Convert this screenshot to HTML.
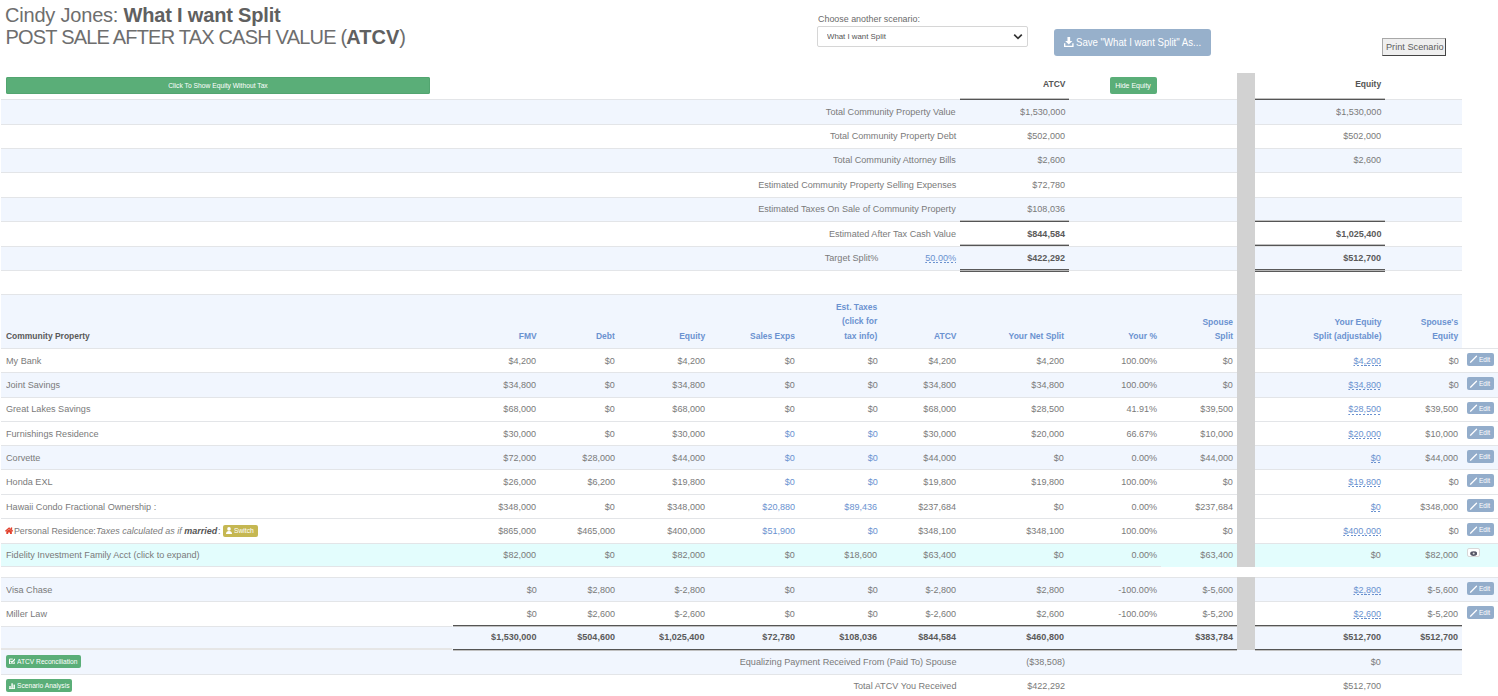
<!DOCTYPE html>
<html><head><meta charset="utf-8"><title>ATCV</title>
<style>
html,body{margin:0;padding:0;background:#fff;width:1498px;height:696px;overflow:hidden;position:relative}
body{font-family:"Liberation Sans",sans-serif;color:#666}
.t{position:absolute;white-space:nowrap;font-family:"Liberation Sans",sans-serif}
</style></head><body>
<div class="t" style="left:5px;top:4.4px;font-size:20px;line-height:22px;color:#6e6e6e"><span style="letter-spacing:-0.2px">Cindy Jones: </span><b style="color:#606060;letter-spacing:-0.18px">What I want Split</b></div>
<div class="t" style="left:5.5px;top:26.4px;font-size:20px;line-height:22px;color:#6e6e6e"><span style="letter-spacing:-0.8px">POST SALE AFTER TAX CASH VALUE (</span><b style="color:#606060">ATCV</b>)</div>
<div class="t" style="left:817.5px;top:13px;height:12px;line-height:12px;font-size:9.5px;color:#6a6a6a;transform-origin:left center;transform:scaleX(0.937);">Choose another scenario:</div>
<div style="position:absolute;left:817.3px;top:26px;width:210.3px;height:20.8px;box-sizing:border-box;border:1px solid #d6d6d6;border-radius:2px;background:#fff"></div>
<div class="t" style="left:827.2px;top:27px;height:20.4px;line-height:20.4px;font-size:8px;color:#555;transform-origin:left center;transform:scaleX(0.98);">What I want Split</div>
<svg style="position:absolute;left:1013px;top:32.5px" width="10" height="8" viewBox="0 0 10 8"><path d="M1.2 1.6 L5 5.4 L8.8 1.6" stroke="#333" stroke-width="1.7" fill="none"/></svg>
<div style="position:absolute;left:1054.2px;top:29.1px;width:156.4px;height:26.6px;background:#97b0cb;border-radius:3px"></div>
<svg style="position:absolute;left:1064.2px;top:36.5px" width="9.6" height="10" viewBox="0 0 10 10.4"><path d="M3.6 0 H6.4 V4.2 H8.8 L5 7.8 L1.2 4.2 H3.6 Z" fill="#fff"/><path d="M0 6.6 V10.4 H10 V6.6 H8.6 V9 H1.4 V6.6 Z" fill="#fff"/></svg>
<div class="t" style="left:1076px;top:29.1px;height:26.6px;line-height:26.6px;font-size:11.5px;color:#fff;transform-origin:left center;transform:scaleX(0.837);">Save "What I want Split" As...</div>
<div style="position:absolute;left:1382.4px;top:38.3px;width:63.2px;height:17.4px;box-sizing:border-box;background:#efefef;border:1px solid;border-color:#a8a8a8 #444 #444 #a8a8a8"></div>
<div class="t" style="left:1386px;top:38.9px;height:17.4px;line-height:17.4px;font-size:9px;color:#5e5e5e;transform-origin:left center;transform:scaleX(1.02);">Print Scenario</div>
<div style="position:absolute;left:5.6px;top:77.1px;width:424.6px;height:17px;background:#5aae78;border-radius:2px;box-shadow:inset 0 0 0 1px #52a570"></div>
<div class="t" style="left:17.5px;width:400px;text-align:center;top:77.1px;height:17px;line-height:17px;font-size:7px;color:#fff;transform-origin:center center;transform:scaleX(0.96);">Click To Show Equity Without Tax</div>
<div class="t" style="right:433px;top:73.80000000000001px;height:20px;line-height:20px;font-size:8.9px;color:#555;transform-origin:right center;transform:scaleX(0.955);"><b>ATCV</b></div>
<div style="position:absolute;left:1110.3px;top:77px;width:46.5px;height:17.1px;background:#5aae78;border-radius:2px"></div>
<div class="t" style="left:933.4000000000001px;width:400px;text-align:center;top:77.3px;height:17.1px;line-height:17.1px;font-size:7.2px;color:#fff;transform-origin:center center;transform:scaleX(0.97);">Hide Equity</div>
<div class="t" style="right:117px;top:73.80000000000001px;height:20px;line-height:20px;font-size:8.9px;color:#555;transform-origin:right center;transform:scaleX(0.955);"><b>Equity</b></div>
<div style="position:absolute;left:1px;top:99.3px;width:1461px;height:24.375px;background:#f1f6fe"></div>
<div style="position:absolute;left:1px;top:99.3px;width:1461px;height:1px;background:#e3e5e8"></div>
<div class="t" style="right:542px;top:99.7px;height:24.375px;line-height:24.375px;font-size:8.9px;color:#7a7a7a;transform-origin:right center;transform:scaleX(1.025);">Total Community Property Value</div>
<div class="t" style="right:433px;top:99.7px;height:24.375px;line-height:24.375px;font-size:8.9px;color:#7a7a7a;transform-origin:right center;transform:scaleX(1.02);">$1,530,000</div>
<div class="t" style="right:117px;top:99.7px;height:24.375px;line-height:24.375px;font-size:8.9px;color:#7a7a7a;transform-origin:right center;transform:scaleX(1.02);">$1,530,000</div>
<div style="position:absolute;left:1px;top:123.675px;width:1461px;height:1px;background:#e3e5e8"></div>
<div class="t" style="right:542px;top:124.075px;height:24.375px;line-height:24.375px;font-size:8.9px;color:#7a7a7a;transform-origin:right center;transform:scaleX(1.025);">Total Community Property Debt</div>
<div class="t" style="right:433px;top:124.075px;height:24.375px;line-height:24.375px;font-size:8.9px;color:#7a7a7a;transform-origin:right center;transform:scaleX(1.02);">$502,000</div>
<div class="t" style="right:117px;top:124.075px;height:24.375px;line-height:24.375px;font-size:8.9px;color:#7a7a7a;transform-origin:right center;transform:scaleX(1.02);">$502,000</div>
<div style="position:absolute;left:1px;top:148.05px;width:1461px;height:24.375px;background:#f1f6fe"></div>
<div style="position:absolute;left:1px;top:148.05px;width:1461px;height:1px;background:#e3e5e8"></div>
<div class="t" style="right:542px;top:148.45000000000002px;height:24.375px;line-height:24.375px;font-size:8.9px;color:#7a7a7a;transform-origin:right center;transform:scaleX(1.025);">Total Community Attorney Bills</div>
<div class="t" style="right:433px;top:148.45000000000002px;height:24.375px;line-height:24.375px;font-size:8.9px;color:#7a7a7a;transform-origin:right center;transform:scaleX(1.02);">$2,600</div>
<div class="t" style="right:117px;top:148.45000000000002px;height:24.375px;line-height:24.375px;font-size:8.9px;color:#7a7a7a;transform-origin:right center;transform:scaleX(1.02);">$2,600</div>
<div style="position:absolute;left:1px;top:172.425px;width:1461px;height:1px;background:#e3e5e8"></div>
<div class="t" style="right:542px;top:172.82500000000002px;height:24.375px;line-height:24.375px;font-size:8.9px;color:#7a7a7a;transform-origin:right center;transform:scaleX(1.025);">Estimated Community Property Selling Expenses</div>
<div class="t" style="right:433px;top:172.82500000000002px;height:24.375px;line-height:24.375px;font-size:8.9px;color:#7a7a7a;transform-origin:right center;transform:scaleX(1.02);">$72,780</div>
<div style="position:absolute;left:1px;top:196.8px;width:1461px;height:24.375px;background:#f1f6fe"></div>
<div style="position:absolute;left:1px;top:196.8px;width:1461px;height:1px;background:#e3e5e8"></div>
<div class="t" style="right:542px;top:197.20000000000002px;height:24.375px;line-height:24.375px;font-size:8.9px;color:#7a7a7a;transform-origin:right center;transform:scaleX(1.025);">Estimated Taxes On Sale of Community Property</div>
<div class="t" style="right:433px;top:197.20000000000002px;height:24.375px;line-height:24.375px;font-size:8.9px;color:#7a7a7a;transform-origin:right center;transform:scaleX(1.02);">$108,036</div>
<div style="position:absolute;left:1px;top:221.175px;width:1461px;height:1px;background:#e3e5e8"></div>
<div class="t" style="right:542px;top:221.57500000000002px;height:24.375px;line-height:24.375px;font-size:8.9px;color:#7a7a7a;transform-origin:right center;transform:scaleX(1.025);">Estimated After Tax Cash Value</div>
<div class="t" style="right:433px;top:221.57500000000002px;height:24.375px;line-height:24.375px;font-size:8.9px;color:#5a5a5a;transform-origin:right center;transform:scaleX(1.02);"><b>$844,584</b></div>
<div class="t" style="right:117px;top:221.57500000000002px;height:24.375px;line-height:24.375px;font-size:8.9px;color:#5a5a5a;transform-origin:right center;transform:scaleX(1.02);"><b>$1,025,400</b></div>
<div style="position:absolute;left:1px;top:245.55px;width:1461px;height:24.375px;background:#f1f6fe"></div>
<div style="position:absolute;left:1px;top:245.55px;width:1461px;height:1px;background:#e3e5e8"></div>
<div class="t" style="right:620px;top:245.95000000000002px;height:24.375px;line-height:24.375px;font-size:8.9px;color:#7a7a7a;transform-origin:right center;transform:scaleX(1.025);">Target Split%</div>
<div class="t" style="right:542px;top:245.95000000000002px;height:24.375px;line-height:24.375px;font-size:8.9px;color:#6b92d0;transform-origin:right center;transform:scaleX(1.025);"><span style="background:repeating-linear-gradient(90deg,#6b92d0 0 2px,transparent 2px 3.6px) right bottom/100% 1px no-repeat;line-height:9px;padding-bottom:0.5px;display:inline-block">50.00%</span></div>
<div class="t" style="right:433px;top:245.95000000000002px;height:24.375px;line-height:24.375px;font-size:8.9px;color:#5a5a5a;transform-origin:right center;transform:scaleX(1.02);"><b>$422,292</b></div>
<div class="t" style="right:117px;top:245.95000000000002px;height:24.375px;line-height:24.375px;font-size:8.9px;color:#5a5a5a;transform-origin:right center;transform:scaleX(1.02);"><b>$512,700</b></div>
<div style="position:absolute;left:1px;top:269.925px;width:1461px;height:1px;background:#e3e5e8"></div>
<div style="position:absolute;left:1px;top:294.3px;width:1461px;height:1px;background:#e3e5e8"></div>
<div style="position:absolute;left:960px;top:98px;width:109px;height:1px;background:#c0c0c0;z-index:2"></div>
<div style="position:absolute;left:960px;top:99px;width:109px;height:1px;background:#555;z-index:2"></div>
<div style="position:absolute;left:1255px;top:98px;width:130px;height:1px;background:#c0c0c0;z-index:2"></div>
<div style="position:absolute;left:1255px;top:99px;width:130px;height:1px;background:#555;z-index:2"></div>
<div style="position:absolute;left:960px;top:220px;width:109px;height:1px;background:#c0c0c0;z-index:2"></div>
<div style="position:absolute;left:960px;top:221px;width:109px;height:1px;background:#555;z-index:2"></div>
<div style="position:absolute;left:1255px;top:220px;width:130px;height:1px;background:#c0c0c0;z-index:2"></div>
<div style="position:absolute;left:1255px;top:221px;width:130px;height:1px;background:#555;z-index:2"></div>
<div style="position:absolute;left:960px;top:244px;width:109px;height:1px;background:#c0c0c0;z-index:2"></div>
<div style="position:absolute;left:960px;top:245px;width:109px;height:1px;background:#555;z-index:2"></div>
<div style="position:absolute;left:1255px;top:244px;width:130px;height:1px;background:#c0c0c0;z-index:2"></div>
<div style="position:absolute;left:1255px;top:245px;width:130px;height:1px;background:#555;z-index:2"></div>
<div style="position:absolute;left:960px;top:269px;width:109px;height:1px;background:#5a5a5a"></div>
<div style="position:absolute;left:960px;top:270px;width:109px;height:1px;background:#b8b8b8"></div>
<div style="position:absolute;left:960px;top:271px;width:109px;height:1px;background:#5a5a5a"></div>
<div style="position:absolute;left:1255px;top:269px;width:130px;height:1px;background:#5a5a5a"></div>
<div style="position:absolute;left:1255px;top:270px;width:130px;height:1px;background:#b8b8b8"></div>
<div style="position:absolute;left:1255px;top:271px;width:130px;height:1px;background:#5a5a5a"></div>
<div style="position:absolute;left:1px;top:294.3px;width:1461px;height:53.8px;background:#f1f6fe"></div>
<div style="position:absolute;left:1px;top:294.3px;width:1461px;height:1px;background:#e3e5e8"></div>
<div class="t" style="left:5.5px;top:329.1px;font-size:8.9px;color:#5a5a5a;font-weight:bold;line-height:14.6px;transform-origin:left center;transform:scaleX(0.955)">Community Property</div>
<div class="t" style="right:961.6px;top:329.1px;text-align:right;font-size:8.9px;color:#6b92d0;font-weight:bold;line-height:14.6px;transform-origin:right center;transform:scaleX(0.955)">FMV</div>
<div class="t" style="right:883.1px;top:329.1px;text-align:right;font-size:8.9px;color:#6b92d0;font-weight:bold;line-height:14.6px;transform-origin:right center;transform:scaleX(0.955)">Debt</div>
<div class="t" style="right:793.2px;top:329.1px;text-align:right;font-size:8.9px;color:#6b92d0;font-weight:bold;line-height:14.6px;transform-origin:right center;transform:scaleX(0.955)">Equity</div>
<div class="t" style="right:703.2px;top:329.1px;text-align:right;font-size:8.9px;color:#6b92d0;font-weight:bold;line-height:14.6px;transform-origin:right center;transform:scaleX(0.955)">Sales Exps</div>
<div class="t" style="right:620.5px;top:299.90000000000003px;text-align:right;font-size:8.9px;color:#6b92d0;font-weight:bold;line-height:14.6px;transform-origin:right center;transform:scaleX(0.955)">Est. Taxes<br>(click for<br>tax info)</div>
<div class="t" style="right:542px;top:329.1px;text-align:right;font-size:8.9px;color:#6b92d0;font-weight:bold;line-height:14.6px;transform-origin:right center;transform:scaleX(0.955)">ATCV</div>
<div class="t" style="right:433.70000000000005px;top:329.1px;text-align:right;font-size:8.9px;color:#6b92d0;font-weight:bold;line-height:14.6px;transform-origin:right center;transform:scaleX(0.955)">Your Net Split</div>
<div class="t" style="right:341px;top:329.1px;text-align:right;font-size:8.9px;color:#6b92d0;font-weight:bold;line-height:14.6px;transform-origin:right center;transform:scaleX(0.955)">Your %</div>
<div class="t" style="right:265.29999999999995px;top:314.50000000000006px;text-align:right;font-size:8.9px;color:#6b92d0;font-weight:bold;line-height:14.6px;transform-origin:right center;transform:scaleX(0.955)">Spouse<br>Split</div>
<div class="t" style="right:117px;top:314.50000000000006px;text-align:right;font-size:8.9px;color:#6b92d0;font-weight:bold;line-height:14.6px;transform-origin:right center;transform:scaleX(0.955)">Your Equity<br>Split (adjustable)</div>
<div class="t" style="right:39.5px;top:314.50000000000006px;text-align:right;font-size:8.9px;color:#6b92d0;font-weight:bold;line-height:14.6px;transform-origin:right center;transform:scaleX(0.955)">Spouse's<br>Equity</div>
<div style="position:absolute;left:1px;top:348.1px;width:1497px;height:1px;background:#e3e5e8"></div>
<div class="t" style="left:5.5px;top:348.5px;height:24.299999999999955px;line-height:24.299999999999955px;font-size:8.9px;color:#7a7a7a;transform-origin:left center;transform:scaleX(1.025);">My Bank</div>
<div class="t" style="right:961.6px;top:348.5px;height:24.299999999999955px;line-height:24.299999999999955px;font-size:8.9px;color:#7a7a7a;transform-origin:right center;transform:scaleX(1.02);">$4,200</div>
<div class="t" style="right:883.1px;top:348.5px;height:24.299999999999955px;line-height:24.299999999999955px;font-size:8.9px;color:#7a7a7a;transform-origin:right center;transform:scaleX(1.02);">$0</div>
<div class="t" style="right:793.2px;top:348.5px;height:24.299999999999955px;line-height:24.299999999999955px;font-size:8.9px;color:#7a7a7a;transform-origin:right center;transform:scaleX(1.02);">$4,200</div>
<div class="t" style="right:703.2px;top:348.5px;height:24.299999999999955px;line-height:24.299999999999955px;font-size:8.9px;color:#7a7a7a;transform-origin:right center;transform:scaleX(1.02);">$0</div>
<div class="t" style="right:620.5px;top:348.5px;height:24.299999999999955px;line-height:24.299999999999955px;font-size:8.9px;color:#7a7a7a;transform-origin:right center;transform:scaleX(1.02);">$0</div>
<div class="t" style="right:542px;top:348.5px;height:24.299999999999955px;line-height:24.299999999999955px;font-size:8.9px;color:#7a7a7a;transform-origin:right center;transform:scaleX(1.02);">$4,200</div>
<div class="t" style="right:433.70000000000005px;top:348.5px;height:24.299999999999955px;line-height:24.299999999999955px;font-size:8.9px;color:#7a7a7a;transform-origin:right center;transform:scaleX(1.02);">$4,200</div>
<div class="t" style="right:341px;top:348.5px;height:24.299999999999955px;line-height:24.299999999999955px;font-size:8.9px;color:#7a7a7a;transform-origin:right center;transform:scaleX(1.02);">100.00%</div>
<div class="t" style="right:265.29999999999995px;top:348.5px;height:24.299999999999955px;line-height:24.299999999999955px;font-size:8.9px;color:#7a7a7a;transform-origin:right center;transform:scaleX(1.02);">$0</div>
<div class="t" style="right:117px;top:348.5px;height:24.299999999999955px;line-height:24.299999999999955px;font-size:8.9px;color:#6b92d0;transform-origin:right center;transform:scaleX(1.02);"><span style="background:repeating-linear-gradient(90deg,#6b92d0 0 2px,transparent 2px 3.6px) right bottom/100% 1px no-repeat;line-height:9px;padding-bottom:0.5px;display:inline-block">$4,200</span></div>
<div class="t" style="right:39.5px;top:348.5px;height:24.299999999999955px;line-height:24.299999999999955px;font-size:8.9px;color:#7a7a7a;transform-origin:right center;transform:scaleX(1.02);">$0</div>
<div style="position:absolute;left:1466.8px;top:353.0px;width:27.1px;height:12.6px;background:#93adcb;border-radius:2px"></div>
<svg style="position:absolute;left:1469px;top:355.40000000000003px" width="9" height="9" viewBox="0 0 9 9"><path d="M1.5 7.2 L7.5 1.2" stroke="#fff" stroke-width="1.25" stroke-linecap="round"/></svg>
<div class="t" style="left:1478.6px;top:353.8px;height:12.6px;line-height:12.6px;font-size:7px;color:#fff;transform-origin:left center;transform:scaleX(0.92);">Edit</div>
<div style="position:absolute;left:1px;top:372.4px;width:1497px;height:24.600000000000023px;background:#f1f6fe"></div>
<div style="position:absolute;left:1px;top:372.4px;width:1497px;height:1px;background:#e3e5e8"></div>
<div class="t" style="left:5.5px;top:372.79999999999995px;height:24.600000000000023px;line-height:24.600000000000023px;font-size:8.9px;color:#7a7a7a;transform-origin:left center;transform:scaleX(1.025);">Joint Savings</div>
<div class="t" style="right:961.6px;top:372.79999999999995px;height:24.600000000000023px;line-height:24.600000000000023px;font-size:8.9px;color:#7a7a7a;transform-origin:right center;transform:scaleX(1.02);">$34,800</div>
<div class="t" style="right:883.1px;top:372.79999999999995px;height:24.600000000000023px;line-height:24.600000000000023px;font-size:8.9px;color:#7a7a7a;transform-origin:right center;transform:scaleX(1.02);">$0</div>
<div class="t" style="right:793.2px;top:372.79999999999995px;height:24.600000000000023px;line-height:24.600000000000023px;font-size:8.9px;color:#7a7a7a;transform-origin:right center;transform:scaleX(1.02);">$34,800</div>
<div class="t" style="right:703.2px;top:372.79999999999995px;height:24.600000000000023px;line-height:24.600000000000023px;font-size:8.9px;color:#7a7a7a;transform-origin:right center;transform:scaleX(1.02);">$0</div>
<div class="t" style="right:620.5px;top:372.79999999999995px;height:24.600000000000023px;line-height:24.600000000000023px;font-size:8.9px;color:#7a7a7a;transform-origin:right center;transform:scaleX(1.02);">$0</div>
<div class="t" style="right:542px;top:372.79999999999995px;height:24.600000000000023px;line-height:24.600000000000023px;font-size:8.9px;color:#7a7a7a;transform-origin:right center;transform:scaleX(1.02);">$34,800</div>
<div class="t" style="right:433.70000000000005px;top:372.79999999999995px;height:24.600000000000023px;line-height:24.600000000000023px;font-size:8.9px;color:#7a7a7a;transform-origin:right center;transform:scaleX(1.02);">$34,800</div>
<div class="t" style="right:341px;top:372.79999999999995px;height:24.600000000000023px;line-height:24.600000000000023px;font-size:8.9px;color:#7a7a7a;transform-origin:right center;transform:scaleX(1.02);">100.00%</div>
<div class="t" style="right:265.29999999999995px;top:372.79999999999995px;height:24.600000000000023px;line-height:24.600000000000023px;font-size:8.9px;color:#7a7a7a;transform-origin:right center;transform:scaleX(1.02);">$0</div>
<div class="t" style="right:117px;top:372.79999999999995px;height:24.600000000000023px;line-height:24.600000000000023px;font-size:8.9px;color:#6b92d0;transform-origin:right center;transform:scaleX(1.02);"><span style="background:repeating-linear-gradient(90deg,#6b92d0 0 2px,transparent 2px 3.6px) right bottom/100% 1px no-repeat;line-height:9px;padding-bottom:0.5px;display:inline-block">$34,800</span></div>
<div class="t" style="right:39.5px;top:372.79999999999995px;height:24.600000000000023px;line-height:24.600000000000023px;font-size:8.9px;color:#7a7a7a;transform-origin:right center;transform:scaleX(1.02);">$0</div>
<div style="position:absolute;left:1466.8px;top:377.29999999999995px;width:27.1px;height:12.6px;background:#93adcb;border-radius:2px"></div>
<svg style="position:absolute;left:1469px;top:379.7px" width="9" height="9" viewBox="0 0 9 9"><path d="M1.5 7.2 L7.5 1.2" stroke="#fff" stroke-width="1.25" stroke-linecap="round"/></svg>
<div class="t" style="left:1478.6px;top:378.09999999999997px;height:12.6px;line-height:12.6px;font-size:7px;color:#fff;transform-origin:left center;transform:scaleX(0.92);">Edit</div>
<div style="position:absolute;left:1px;top:397px;width:1497px;height:1px;background:#e3e5e8"></div>
<div class="t" style="left:5.5px;top:397.4px;height:24.100000000000023px;line-height:24.100000000000023px;font-size:8.9px;color:#7a7a7a;transform-origin:left center;transform:scaleX(1.025);">Great Lakes Savings</div>
<div class="t" style="right:961.6px;top:397.4px;height:24.100000000000023px;line-height:24.100000000000023px;font-size:8.9px;color:#7a7a7a;transform-origin:right center;transform:scaleX(1.02);">$68,000</div>
<div class="t" style="right:883.1px;top:397.4px;height:24.100000000000023px;line-height:24.100000000000023px;font-size:8.9px;color:#7a7a7a;transform-origin:right center;transform:scaleX(1.02);">$0</div>
<div class="t" style="right:793.2px;top:397.4px;height:24.100000000000023px;line-height:24.100000000000023px;font-size:8.9px;color:#7a7a7a;transform-origin:right center;transform:scaleX(1.02);">$68,000</div>
<div class="t" style="right:703.2px;top:397.4px;height:24.100000000000023px;line-height:24.100000000000023px;font-size:8.9px;color:#7a7a7a;transform-origin:right center;transform:scaleX(1.02);">$0</div>
<div class="t" style="right:620.5px;top:397.4px;height:24.100000000000023px;line-height:24.100000000000023px;font-size:8.9px;color:#7a7a7a;transform-origin:right center;transform:scaleX(1.02);">$0</div>
<div class="t" style="right:542px;top:397.4px;height:24.100000000000023px;line-height:24.100000000000023px;font-size:8.9px;color:#7a7a7a;transform-origin:right center;transform:scaleX(1.02);">$68,000</div>
<div class="t" style="right:433.70000000000005px;top:397.4px;height:24.100000000000023px;line-height:24.100000000000023px;font-size:8.9px;color:#7a7a7a;transform-origin:right center;transform:scaleX(1.02);">$28,500</div>
<div class="t" style="right:341px;top:397.4px;height:24.100000000000023px;line-height:24.100000000000023px;font-size:8.9px;color:#7a7a7a;transform-origin:right center;transform:scaleX(1.02);">41.91%</div>
<div class="t" style="right:265.29999999999995px;top:397.4px;height:24.100000000000023px;line-height:24.100000000000023px;font-size:8.9px;color:#7a7a7a;transform-origin:right center;transform:scaleX(1.02);">$39,500</div>
<div class="t" style="right:117px;top:397.4px;height:24.100000000000023px;line-height:24.100000000000023px;font-size:8.9px;color:#6b92d0;transform-origin:right center;transform:scaleX(1.02);"><span style="background:repeating-linear-gradient(90deg,#6b92d0 0 2px,transparent 2px 3.6px) right bottom/100% 1px no-repeat;line-height:9px;padding-bottom:0.5px;display:inline-block">$28,500</span></div>
<div class="t" style="right:39.5px;top:397.4px;height:24.100000000000023px;line-height:24.100000000000023px;font-size:8.9px;color:#7a7a7a;transform-origin:right center;transform:scaleX(1.02);">$39,500</div>
<div style="position:absolute;left:1466.8px;top:401.9px;width:27.1px;height:12.6px;background:#93adcb;border-radius:2px"></div>
<svg style="position:absolute;left:1469px;top:404.3px" width="9" height="9" viewBox="0 0 9 9"><path d="M1.5 7.2 L7.5 1.2" stroke="#fff" stroke-width="1.25" stroke-linecap="round"/></svg>
<div class="t" style="left:1478.6px;top:402.7px;height:12.6px;line-height:12.6px;font-size:7px;color:#fff;transform-origin:left center;transform:scaleX(0.92);">Edit</div>
<div style="position:absolute;left:1px;top:421.1px;width:1497px;height:1px;background:#e3e5e8"></div>
<div class="t" style="left:5.5px;top:421.5px;height:24.19999999999999px;line-height:24.19999999999999px;font-size:8.9px;color:#7a7a7a;transform-origin:left center;transform:scaleX(1.025);">Furnishings Residence</div>
<div class="t" style="right:961.6px;top:421.5px;height:24.19999999999999px;line-height:24.19999999999999px;font-size:8.9px;color:#7a7a7a;transform-origin:right center;transform:scaleX(1.02);">$30,000</div>
<div class="t" style="right:883.1px;top:421.5px;height:24.19999999999999px;line-height:24.19999999999999px;font-size:8.9px;color:#7a7a7a;transform-origin:right center;transform:scaleX(1.02);">$0</div>
<div class="t" style="right:793.2px;top:421.5px;height:24.19999999999999px;line-height:24.19999999999999px;font-size:8.9px;color:#7a7a7a;transform-origin:right center;transform:scaleX(1.02);">$30,000</div>
<div class="t" style="right:703.2px;top:421.5px;height:24.19999999999999px;line-height:24.19999999999999px;font-size:8.9px;color:#6b92d0;transform-origin:right center;transform:scaleX(1.02);">$0</div>
<div class="t" style="right:620.5px;top:421.5px;height:24.19999999999999px;line-height:24.19999999999999px;font-size:8.9px;color:#6b92d0;transform-origin:right center;transform:scaleX(1.02);">$0</div>
<div class="t" style="right:542px;top:421.5px;height:24.19999999999999px;line-height:24.19999999999999px;font-size:8.9px;color:#7a7a7a;transform-origin:right center;transform:scaleX(1.02);">$30,000</div>
<div class="t" style="right:433.70000000000005px;top:421.5px;height:24.19999999999999px;line-height:24.19999999999999px;font-size:8.9px;color:#7a7a7a;transform-origin:right center;transform:scaleX(1.02);">$20,000</div>
<div class="t" style="right:341px;top:421.5px;height:24.19999999999999px;line-height:24.19999999999999px;font-size:8.9px;color:#7a7a7a;transform-origin:right center;transform:scaleX(1.02);">66.67%</div>
<div class="t" style="right:265.29999999999995px;top:421.5px;height:24.19999999999999px;line-height:24.19999999999999px;font-size:8.9px;color:#7a7a7a;transform-origin:right center;transform:scaleX(1.02);">$10,000</div>
<div class="t" style="right:117px;top:421.5px;height:24.19999999999999px;line-height:24.19999999999999px;font-size:8.9px;color:#6b92d0;transform-origin:right center;transform:scaleX(1.02);"><span style="background:repeating-linear-gradient(90deg,#6b92d0 0 2px,transparent 2px 3.6px) right bottom/100% 1px no-repeat;line-height:9px;padding-bottom:0.5px;display:inline-block">$20,000</span></div>
<div class="t" style="right:39.5px;top:421.5px;height:24.19999999999999px;line-height:24.19999999999999px;font-size:8.9px;color:#7a7a7a;transform-origin:right center;transform:scaleX(1.02);">$10,000</div>
<div style="position:absolute;left:1466.8px;top:426.0px;width:27.1px;height:12.6px;background:#93adcb;border-radius:2px"></div>
<svg style="position:absolute;left:1469px;top:428.40000000000003px" width="9" height="9" viewBox="0 0 9 9"><path d="M1.5 7.2 L7.5 1.2" stroke="#fff" stroke-width="1.25" stroke-linecap="round"/></svg>
<div class="t" style="left:1478.6px;top:426.8px;height:12.6px;line-height:12.6px;font-size:7px;color:#fff;transform-origin:left center;transform:scaleX(0.92);">Edit</div>
<div style="position:absolute;left:1px;top:445.3px;width:1497px;height:24.099999999999966px;background:#f1f6fe"></div>
<div style="position:absolute;left:1px;top:445.3px;width:1497px;height:1px;background:#e3e5e8"></div>
<div class="t" style="left:5.5px;top:445.7px;height:24.099999999999966px;line-height:24.099999999999966px;font-size:8.9px;color:#7a7a7a;transform-origin:left center;transform:scaleX(1.025);">Corvette</div>
<div class="t" style="right:961.6px;top:445.7px;height:24.099999999999966px;line-height:24.099999999999966px;font-size:8.9px;color:#7a7a7a;transform-origin:right center;transform:scaleX(1.02);">$72,000</div>
<div class="t" style="right:883.1px;top:445.7px;height:24.099999999999966px;line-height:24.099999999999966px;font-size:8.9px;color:#7a7a7a;transform-origin:right center;transform:scaleX(1.02);">$28,000</div>
<div class="t" style="right:793.2px;top:445.7px;height:24.099999999999966px;line-height:24.099999999999966px;font-size:8.9px;color:#7a7a7a;transform-origin:right center;transform:scaleX(1.02);">$44,000</div>
<div class="t" style="right:703.2px;top:445.7px;height:24.099999999999966px;line-height:24.099999999999966px;font-size:8.9px;color:#6b92d0;transform-origin:right center;transform:scaleX(1.02);">$0</div>
<div class="t" style="right:620.5px;top:445.7px;height:24.099999999999966px;line-height:24.099999999999966px;font-size:8.9px;color:#6b92d0;transform-origin:right center;transform:scaleX(1.02);">$0</div>
<div class="t" style="right:542px;top:445.7px;height:24.099999999999966px;line-height:24.099999999999966px;font-size:8.9px;color:#7a7a7a;transform-origin:right center;transform:scaleX(1.02);">$44,000</div>
<div class="t" style="right:433.70000000000005px;top:445.7px;height:24.099999999999966px;line-height:24.099999999999966px;font-size:8.9px;color:#7a7a7a;transform-origin:right center;transform:scaleX(1.02);">$0</div>
<div class="t" style="right:341px;top:445.7px;height:24.099999999999966px;line-height:24.099999999999966px;font-size:8.9px;color:#7a7a7a;transform-origin:right center;transform:scaleX(1.02);">0.00%</div>
<div class="t" style="right:265.29999999999995px;top:445.7px;height:24.099999999999966px;line-height:24.099999999999966px;font-size:8.9px;color:#7a7a7a;transform-origin:right center;transform:scaleX(1.02);">$44,000</div>
<div class="t" style="right:117px;top:445.7px;height:24.099999999999966px;line-height:24.099999999999966px;font-size:8.9px;color:#6b92d0;transform-origin:right center;transform:scaleX(1.02);"><span style="background:repeating-linear-gradient(90deg,#6b92d0 0 2px,transparent 2px 3.6px) right bottom/100% 1px no-repeat;line-height:9px;padding-bottom:0.5px;display:inline-block">$0</span></div>
<div class="t" style="right:39.5px;top:445.7px;height:24.099999999999966px;line-height:24.099999999999966px;font-size:8.9px;color:#7a7a7a;transform-origin:right center;transform:scaleX(1.02);">$44,000</div>
<div style="position:absolute;left:1466.8px;top:450.2px;width:27.1px;height:12.6px;background:#93adcb;border-radius:2px"></div>
<svg style="position:absolute;left:1469px;top:452.6px" width="9" height="9" viewBox="0 0 9 9"><path d="M1.5 7.2 L7.5 1.2" stroke="#fff" stroke-width="1.25" stroke-linecap="round"/></svg>
<div class="t" style="left:1478.6px;top:451.0px;height:12.6px;line-height:12.6px;font-size:7px;color:#fff;transform-origin:left center;transform:scaleX(0.92);">Edit</div>
<div style="position:absolute;left:1px;top:469.4px;width:1497px;height:1px;background:#e3e5e8"></div>
<div class="t" style="left:5.5px;top:469.79999999999995px;height:24.80000000000001px;line-height:24.80000000000001px;font-size:8.9px;color:#7a7a7a;transform-origin:left center;transform:scaleX(1.025);">Honda EXL</div>
<div class="t" style="right:961.6px;top:469.79999999999995px;height:24.80000000000001px;line-height:24.80000000000001px;font-size:8.9px;color:#7a7a7a;transform-origin:right center;transform:scaleX(1.02);">$26,000</div>
<div class="t" style="right:883.1px;top:469.79999999999995px;height:24.80000000000001px;line-height:24.80000000000001px;font-size:8.9px;color:#7a7a7a;transform-origin:right center;transform:scaleX(1.02);">$6,200</div>
<div class="t" style="right:793.2px;top:469.79999999999995px;height:24.80000000000001px;line-height:24.80000000000001px;font-size:8.9px;color:#7a7a7a;transform-origin:right center;transform:scaleX(1.02);">$19,800</div>
<div class="t" style="right:703.2px;top:469.79999999999995px;height:24.80000000000001px;line-height:24.80000000000001px;font-size:8.9px;color:#6b92d0;transform-origin:right center;transform:scaleX(1.02);">$0</div>
<div class="t" style="right:620.5px;top:469.79999999999995px;height:24.80000000000001px;line-height:24.80000000000001px;font-size:8.9px;color:#6b92d0;transform-origin:right center;transform:scaleX(1.02);">$0</div>
<div class="t" style="right:542px;top:469.79999999999995px;height:24.80000000000001px;line-height:24.80000000000001px;font-size:8.9px;color:#7a7a7a;transform-origin:right center;transform:scaleX(1.02);">$19,800</div>
<div class="t" style="right:433.70000000000005px;top:469.79999999999995px;height:24.80000000000001px;line-height:24.80000000000001px;font-size:8.9px;color:#7a7a7a;transform-origin:right center;transform:scaleX(1.02);">$19,800</div>
<div class="t" style="right:341px;top:469.79999999999995px;height:24.80000000000001px;line-height:24.80000000000001px;font-size:8.9px;color:#7a7a7a;transform-origin:right center;transform:scaleX(1.02);">100.00%</div>
<div class="t" style="right:265.29999999999995px;top:469.79999999999995px;height:24.80000000000001px;line-height:24.80000000000001px;font-size:8.9px;color:#7a7a7a;transform-origin:right center;transform:scaleX(1.02);">$0</div>
<div class="t" style="right:117px;top:469.79999999999995px;height:24.80000000000001px;line-height:24.80000000000001px;font-size:8.9px;color:#6b92d0;transform-origin:right center;transform:scaleX(1.02);"><span style="background:repeating-linear-gradient(90deg,#6b92d0 0 2px,transparent 2px 3.6px) right bottom/100% 1px no-repeat;line-height:9px;padding-bottom:0.5px;display:inline-block">$19,800</span></div>
<div class="t" style="right:39.5px;top:469.79999999999995px;height:24.80000000000001px;line-height:24.80000000000001px;font-size:8.9px;color:#7a7a7a;transform-origin:right center;transform:scaleX(1.02);">$0</div>
<div style="position:absolute;left:1466.8px;top:474.29999999999995px;width:27.1px;height:12.6px;background:#93adcb;border-radius:2px"></div>
<svg style="position:absolute;left:1469px;top:476.7px" width="9" height="9" viewBox="0 0 9 9"><path d="M1.5 7.2 L7.5 1.2" stroke="#fff" stroke-width="1.25" stroke-linecap="round"/></svg>
<div class="t" style="left:1478.6px;top:475.09999999999997px;height:12.6px;line-height:12.6px;font-size:7px;color:#fff;transform-origin:left center;transform:scaleX(0.92);">Edit</div>
<div style="position:absolute;left:1px;top:494.2px;width:1497px;height:1px;background:#e3e5e8"></div>
<div class="t" style="left:5.5px;top:494.59999999999997px;height:24.000000000000057px;line-height:24.000000000000057px;font-size:8.9px;color:#7a7a7a;transform-origin:left center;transform:scaleX(1.025);">Hawaii Condo Fractional Ownership :</div>
<div class="t" style="right:961.6px;top:494.59999999999997px;height:24.000000000000057px;line-height:24.000000000000057px;font-size:8.9px;color:#7a7a7a;transform-origin:right center;transform:scaleX(1.02);">$348,000</div>
<div class="t" style="right:883.1px;top:494.59999999999997px;height:24.000000000000057px;line-height:24.000000000000057px;font-size:8.9px;color:#7a7a7a;transform-origin:right center;transform:scaleX(1.02);">$0</div>
<div class="t" style="right:793.2px;top:494.59999999999997px;height:24.000000000000057px;line-height:24.000000000000057px;font-size:8.9px;color:#7a7a7a;transform-origin:right center;transform:scaleX(1.02);">$348,000</div>
<div class="t" style="right:703.2px;top:494.59999999999997px;height:24.000000000000057px;line-height:24.000000000000057px;font-size:8.9px;color:#6b92d0;transform-origin:right center;transform:scaleX(1.02);">$20,880</div>
<div class="t" style="right:620.5px;top:494.59999999999997px;height:24.000000000000057px;line-height:24.000000000000057px;font-size:8.9px;color:#6b92d0;transform-origin:right center;transform:scaleX(1.02);">$89,436</div>
<div class="t" style="right:542px;top:494.59999999999997px;height:24.000000000000057px;line-height:24.000000000000057px;font-size:8.9px;color:#7a7a7a;transform-origin:right center;transform:scaleX(1.02);">$237,684</div>
<div class="t" style="right:433.70000000000005px;top:494.59999999999997px;height:24.000000000000057px;line-height:24.000000000000057px;font-size:8.9px;color:#7a7a7a;transform-origin:right center;transform:scaleX(1.02);">$0</div>
<div class="t" style="right:341px;top:494.59999999999997px;height:24.000000000000057px;line-height:24.000000000000057px;font-size:8.9px;color:#7a7a7a;transform-origin:right center;transform:scaleX(1.02);">0.00%</div>
<div class="t" style="right:265.29999999999995px;top:494.59999999999997px;height:24.000000000000057px;line-height:24.000000000000057px;font-size:8.9px;color:#7a7a7a;transform-origin:right center;transform:scaleX(1.02);">$237,684</div>
<div class="t" style="right:117px;top:494.59999999999997px;height:24.000000000000057px;line-height:24.000000000000057px;font-size:8.9px;color:#6b92d0;transform-origin:right center;transform:scaleX(1.02);"><span style="background:repeating-linear-gradient(90deg,#6b92d0 0 2px,transparent 2px 3.6px) right bottom/100% 1px no-repeat;line-height:9px;padding-bottom:0.5px;display:inline-block">$0</span></div>
<div class="t" style="right:39.5px;top:494.59999999999997px;height:24.000000000000057px;line-height:24.000000000000057px;font-size:8.9px;color:#7a7a7a;transform-origin:right center;transform:scaleX(1.02);">$348,000</div>
<div style="position:absolute;left:1466.8px;top:499.09999999999997px;width:27.1px;height:12.6px;background:#93adcb;border-radius:2px"></div>
<svg style="position:absolute;left:1469px;top:501.5px" width="9" height="9" viewBox="0 0 9 9"><path d="M1.5 7.2 L7.5 1.2" stroke="#fff" stroke-width="1.25" stroke-linecap="round"/></svg>
<div class="t" style="left:1478.6px;top:499.9px;height:12.6px;line-height:12.6px;font-size:7px;color:#fff;transform-origin:left center;transform:scaleX(0.92);">Edit</div>
<div style="position:absolute;left:1px;top:518.2px;width:1497px;height:1px;background:#e3e5e8"></div>
<svg style="position:absolute;left:5.4px;top:526.5px" width="8.2" height="7.2" viewBox="0 0 16 14"><path d="M0 7.4 L8 0.4 L16 7.4 L14.4 9.2 L8 3.6 L1.6 9.2 Z" fill="#e2412d"/><rect x="11.4" y="0.8" width="2.6" height="4.4" fill="#e2412d"/><path d="M2.6 8.4 L8 3.9 L13.4 8.4 V14 H9.8 V10.6 H6.2 V14 H2.6 Z" fill="#e2412d"/></svg>
<div class="t" style="left:13.9px;top:518.6px;height:24.899999999999977px;line-height:24.899999999999977px;font-size:8.9px;color:#7a7a7a;transform-origin:left center;transform:scaleX(1.0);">Personal Residence:</div>
<div class="t" style="left:96.2px;top:518.6px;height:24.899999999999977px;line-height:24.899999999999977px;font-size:8.9px;color:#7a7a7a;transform-origin:left center;transform:scaleX(1.014);"><i>Taxes calculated as if <b style="color:#555">married</b></i></div>
<div class="t" style="left:218.4px;top:518.6px;height:24.899999999999977px;line-height:24.899999999999977px;font-size:8.9px;color:#7a7a7a;transform-origin:left center;transform:scaleX(1.025);">:</div>
<div style="position:absolute;left:222.8px;top:524.8000000000001px;width:35.3px;height:12.4px;background:#c5b752;border-radius:2px"></div>
<svg style="position:absolute;left:225.8px;top:527.4000000000001px" width="6" height="7" viewBox="0 0 6 7"><circle cx="3" cy="1.9" r="1.8" fill="#fff"/><path d="M0 7 Q0 3.9 3 3.9 Q6 3.9 6 7 Z" fill="#fff"/></svg>
<div class="t" style="left:234.2px;top:524.8000000000001px;height:12.4px;line-height:12.4px;font-size:7px;color:#fff;transform-origin:left center;transform:scaleX(0.96);">Switch</div>
<div class="t" style="right:961.6px;top:518.6px;height:24.899999999999977px;line-height:24.899999999999977px;font-size:8.9px;color:#7a7a7a;transform-origin:right center;transform:scaleX(1.02);">$865,000</div>
<div class="t" style="right:883.1px;top:518.6px;height:24.899999999999977px;line-height:24.899999999999977px;font-size:8.9px;color:#7a7a7a;transform-origin:right center;transform:scaleX(1.02);">$465,000</div>
<div class="t" style="right:793.2px;top:518.6px;height:24.899999999999977px;line-height:24.899999999999977px;font-size:8.9px;color:#7a7a7a;transform-origin:right center;transform:scaleX(1.02);">$400,000</div>
<div class="t" style="right:703.2px;top:518.6px;height:24.899999999999977px;line-height:24.899999999999977px;font-size:8.9px;color:#6b92d0;transform-origin:right center;transform:scaleX(1.02);">$51,900</div>
<div class="t" style="right:620.5px;top:518.6px;height:24.899999999999977px;line-height:24.899999999999977px;font-size:8.9px;color:#6b92d0;transform-origin:right center;transform:scaleX(1.02);">$0</div>
<div class="t" style="right:542px;top:518.6px;height:24.899999999999977px;line-height:24.899999999999977px;font-size:8.9px;color:#7a7a7a;transform-origin:right center;transform:scaleX(1.02);">$348,100</div>
<div class="t" style="right:433.70000000000005px;top:518.6px;height:24.899999999999977px;line-height:24.899999999999977px;font-size:8.9px;color:#7a7a7a;transform-origin:right center;transform:scaleX(1.02);">$348,100</div>
<div class="t" style="right:341px;top:518.6px;height:24.899999999999977px;line-height:24.899999999999977px;font-size:8.9px;color:#7a7a7a;transform-origin:right center;transform:scaleX(1.02);">100.00%</div>
<div class="t" style="right:265.29999999999995px;top:518.6px;height:24.899999999999977px;line-height:24.899999999999977px;font-size:8.9px;color:#7a7a7a;transform-origin:right center;transform:scaleX(1.02);">$0</div>
<div class="t" style="right:117px;top:518.6px;height:24.899999999999977px;line-height:24.899999999999977px;font-size:8.9px;color:#6b92d0;transform-origin:right center;transform:scaleX(1.02);"><span style="background:repeating-linear-gradient(90deg,#6b92d0 0 2px,transparent 2px 3.6px) right bottom/100% 1px no-repeat;line-height:9px;padding-bottom:0.5px;display:inline-block">$400,000</span></div>
<div class="t" style="right:39.5px;top:518.6px;height:24.899999999999977px;line-height:24.899999999999977px;font-size:8.9px;color:#7a7a7a;transform-origin:right center;transform:scaleX(1.02);">$0</div>
<div style="position:absolute;left:1466.8px;top:523.1px;width:27.1px;height:12.6px;background:#93adcb;border-radius:2px"></div>
<svg style="position:absolute;left:1469px;top:525.5px" width="9" height="9" viewBox="0 0 9 9"><path d="M1.5 7.2 L7.5 1.2" stroke="#fff" stroke-width="1.25" stroke-linecap="round"/></svg>
<div class="t" style="left:1478.6px;top:523.9px;height:12.6px;line-height:12.6px;font-size:7px;color:#fff;transform-origin:left center;transform:scaleX(0.92);">Edit</div>
<div style="position:absolute;left:1px;top:543.1px;width:1497px;height:23.799999999999955px;background:#e3fdfd"></div>
<div style="position:absolute;left:1px;top:543.1px;width:1497px;height:1px;background:#e3e5e8"></div>
<div class="t" style="left:5.5px;top:543.5px;height:23.799999999999955px;line-height:23.799999999999955px;font-size:8.9px;color:#7a7a7a;transform-origin:left center;transform:scaleX(1.025);">Fidelity Investment Family Acct (click to expand)</div>
<div class="t" style="right:961.6px;top:543.5px;height:23.799999999999955px;line-height:23.799999999999955px;font-size:8.9px;color:#7a7a7a;transform-origin:right center;transform:scaleX(1.02);">$82,000</div>
<div class="t" style="right:883.1px;top:543.5px;height:23.799999999999955px;line-height:23.799999999999955px;font-size:8.9px;color:#7a7a7a;transform-origin:right center;transform:scaleX(1.02);">$0</div>
<div class="t" style="right:793.2px;top:543.5px;height:23.799999999999955px;line-height:23.799999999999955px;font-size:8.9px;color:#7a7a7a;transform-origin:right center;transform:scaleX(1.02);">$82,000</div>
<div class="t" style="right:703.2px;top:543.5px;height:23.799999999999955px;line-height:23.799999999999955px;font-size:8.9px;color:#7a7a7a;transform-origin:right center;transform:scaleX(1.02);">$0</div>
<div class="t" style="right:620.5px;top:543.5px;height:23.799999999999955px;line-height:23.799999999999955px;font-size:8.9px;color:#7a7a7a;transform-origin:right center;transform:scaleX(1.02);">$18,600</div>
<div class="t" style="right:542px;top:543.5px;height:23.799999999999955px;line-height:23.799999999999955px;font-size:8.9px;color:#7a7a7a;transform-origin:right center;transform:scaleX(1.02);">$63,400</div>
<div class="t" style="right:433.70000000000005px;top:543.5px;height:23.799999999999955px;line-height:23.799999999999955px;font-size:8.9px;color:#7a7a7a;transform-origin:right center;transform:scaleX(1.02);">$0</div>
<div class="t" style="right:341px;top:543.5px;height:23.799999999999955px;line-height:23.799999999999955px;font-size:8.9px;color:#7a7a7a;transform-origin:right center;transform:scaleX(1.02);">0.00%</div>
<div class="t" style="right:265.29999999999995px;top:543.5px;height:23.799999999999955px;line-height:23.799999999999955px;font-size:8.9px;color:#7a7a7a;transform-origin:right center;transform:scaleX(1.02);">$63,400</div>
<div class="t" style="right:117px;top:543.5px;height:23.799999999999955px;line-height:23.799999999999955px;font-size:8.9px;color:#7a7a7a;transform-origin:right center;transform:scaleX(1.02);">$0</div>
<div class="t" style="right:39.5px;top:543.5px;height:23.799999999999955px;line-height:23.799999999999955px;font-size:8.9px;color:#7a7a7a;transform-origin:right center;transform:scaleX(1.02);">$82,000</div>
<div style="position:absolute;left:1467px;top:548.3000000000001px;width:13.4px;height:8.4px;box-sizing:border-box;border:1px solid #d8d8d8;border-radius:2px;background:#fff"></div>
<svg style="position:absolute;left:1469.8px;top:550.6px" width="7.4" height="5.2" viewBox="0 0 8 5.6"><ellipse cx="4" cy="2.8" rx="3.8" ry="2.6" fill="#556"/><circle cx="4" cy="2.6" r="1.1" fill="#ddd"/></svg>
<div style="position:absolute;left:1px;top:566.4px;width:1160px;height:1px;background:#e3e5e8"></div>
<div style="position:absolute;left:1161px;top:566.4px;width:337px;height:0.6px;background:#e3fdfd"></div>
<div style="position:absolute;left:1px;top:577.2px;width:1497px;height:24.199999999999932px;background:#f1f6fe"></div>
<div style="position:absolute;left:1px;top:577.2px;width:1497px;height:1px;background:#e3e5e8"></div>
<div class="t" style="left:5.5px;top:577.6px;height:24.199999999999932px;line-height:24.199999999999932px;font-size:8.9px;color:#7a7a7a;transform-origin:left center;transform:scaleX(1.025);">Visa Chase</div>
<div class="t" style="right:961.6px;top:577.6px;height:24.199999999999932px;line-height:24.199999999999932px;font-size:8.9px;color:#7a7a7a;transform-origin:right center;transform:scaleX(1.02);">$0</div>
<div class="t" style="right:883.1px;top:577.6px;height:24.199999999999932px;line-height:24.199999999999932px;font-size:8.9px;color:#7a7a7a;transform-origin:right center;transform:scaleX(1.02);">$2,800</div>
<div class="t" style="right:793.2px;top:577.6px;height:24.199999999999932px;line-height:24.199999999999932px;font-size:8.9px;color:#7a7a7a;transform-origin:right center;transform:scaleX(1.02);">$-2,800</div>
<div class="t" style="right:703.2px;top:577.6px;height:24.199999999999932px;line-height:24.199999999999932px;font-size:8.9px;color:#7a7a7a;transform-origin:right center;transform:scaleX(1.02);">$0</div>
<div class="t" style="right:620.5px;top:577.6px;height:24.199999999999932px;line-height:24.199999999999932px;font-size:8.9px;color:#7a7a7a;transform-origin:right center;transform:scaleX(1.02);">$0</div>
<div class="t" style="right:542px;top:577.6px;height:24.199999999999932px;line-height:24.199999999999932px;font-size:8.9px;color:#7a7a7a;transform-origin:right center;transform:scaleX(1.02);">$-2,800</div>
<div class="t" style="right:433.70000000000005px;top:577.6px;height:24.199999999999932px;line-height:24.199999999999932px;font-size:8.9px;color:#7a7a7a;transform-origin:right center;transform:scaleX(1.02);">$2,800</div>
<div class="t" style="right:341px;top:577.6px;height:24.199999999999932px;line-height:24.199999999999932px;font-size:8.9px;color:#7a7a7a;transform-origin:right center;transform:scaleX(1.02);">-100.00%</div>
<div class="t" style="right:265.29999999999995px;top:577.6px;height:24.199999999999932px;line-height:24.199999999999932px;font-size:8.9px;color:#7a7a7a;transform-origin:right center;transform:scaleX(1.02);">$-5,600</div>
<div class="t" style="right:117px;top:577.6px;height:24.199999999999932px;line-height:24.199999999999932px;font-size:8.9px;color:#6b92d0;transform-origin:right center;transform:scaleX(1.02);"><span style="background:repeating-linear-gradient(90deg,#6b92d0 0 2px,transparent 2px 3.6px) right bottom/100% 1px no-repeat;line-height:9px;padding-bottom:0.5px;display:inline-block">$2,800</span></div>
<div class="t" style="right:39.5px;top:577.6px;height:24.199999999999932px;line-height:24.199999999999932px;font-size:8.9px;color:#7a7a7a;transform-origin:right center;transform:scaleX(1.02);">$-5,600</div>
<div style="position:absolute;left:1466.8px;top:582.1px;width:27.1px;height:12.6px;background:#93adcb;border-radius:2px"></div>
<svg style="position:absolute;left:1469px;top:584.5px" width="9" height="9" viewBox="0 0 9 9"><path d="M1.5 7.2 L7.5 1.2" stroke="#fff" stroke-width="1.25" stroke-linecap="round"/></svg>
<div class="t" style="left:1478.6px;top:582.9px;height:12.6px;line-height:12.6px;font-size:7px;color:#fff;transform-origin:left center;transform:scaleX(0.92);">Edit</div>
<div style="position:absolute;left:1px;top:601.4px;width:1497px;height:1px;background:#e3e5e8"></div>
<div class="t" style="left:5.5px;top:601.8px;height:24.399999999999977px;line-height:24.399999999999977px;font-size:8.9px;color:#7a7a7a;transform-origin:left center;transform:scaleX(1.025);">Miller Law</div>
<div class="t" style="right:961.6px;top:601.8px;height:24.399999999999977px;line-height:24.399999999999977px;font-size:8.9px;color:#7a7a7a;transform-origin:right center;transform:scaleX(1.02);">$0</div>
<div class="t" style="right:883.1px;top:601.8px;height:24.399999999999977px;line-height:24.399999999999977px;font-size:8.9px;color:#7a7a7a;transform-origin:right center;transform:scaleX(1.02);">$2,600</div>
<div class="t" style="right:793.2px;top:601.8px;height:24.399999999999977px;line-height:24.399999999999977px;font-size:8.9px;color:#7a7a7a;transform-origin:right center;transform:scaleX(1.02);">$-2,600</div>
<div class="t" style="right:703.2px;top:601.8px;height:24.399999999999977px;line-height:24.399999999999977px;font-size:8.9px;color:#7a7a7a;transform-origin:right center;transform:scaleX(1.02);">$0</div>
<div class="t" style="right:620.5px;top:601.8px;height:24.399999999999977px;line-height:24.399999999999977px;font-size:8.9px;color:#7a7a7a;transform-origin:right center;transform:scaleX(1.02);">$0</div>
<div class="t" style="right:542px;top:601.8px;height:24.399999999999977px;line-height:24.399999999999977px;font-size:8.9px;color:#7a7a7a;transform-origin:right center;transform:scaleX(1.02);">$-2,600</div>
<div class="t" style="right:433.70000000000005px;top:601.8px;height:24.399999999999977px;line-height:24.399999999999977px;font-size:8.9px;color:#7a7a7a;transform-origin:right center;transform:scaleX(1.02);">$2,600</div>
<div class="t" style="right:341px;top:601.8px;height:24.399999999999977px;line-height:24.399999999999977px;font-size:8.9px;color:#7a7a7a;transform-origin:right center;transform:scaleX(1.02);">-100.00%</div>
<div class="t" style="right:265.29999999999995px;top:601.8px;height:24.399999999999977px;line-height:24.399999999999977px;font-size:8.9px;color:#7a7a7a;transform-origin:right center;transform:scaleX(1.02);">$-5,200</div>
<div class="t" style="right:117px;top:601.8px;height:24.399999999999977px;line-height:24.399999999999977px;font-size:8.9px;color:#6b92d0;transform-origin:right center;transform:scaleX(1.02);"><span style="background:repeating-linear-gradient(90deg,#6b92d0 0 2px,transparent 2px 3.6px) right bottom/100% 1px no-repeat;line-height:9px;padding-bottom:0.5px;display:inline-block">$2,600</span></div>
<div class="t" style="right:39.5px;top:601.8px;height:24.399999999999977px;line-height:24.399999999999977px;font-size:8.9px;color:#7a7a7a;transform-origin:right center;transform:scaleX(1.02);">$-5,200</div>
<div style="position:absolute;left:1466.8px;top:606.3px;width:27.1px;height:12.6px;background:#93adcb;border-radius:2px"></div>
<svg style="position:absolute;left:1469px;top:608.6999999999999px" width="9" height="9" viewBox="0 0 9 9"><path d="M1.5 7.2 L7.5 1.2" stroke="#fff" stroke-width="1.25" stroke-linecap="round"/></svg>
<div class="t" style="left:1478.6px;top:607.0999999999999px;height:12.6px;line-height:12.6px;font-size:7px;color:#fff;transform-origin:left center;transform:scaleX(0.92);">Edit</div>
<div style="position:absolute;left:1px;top:625.8px;width:1461px;height:23.600000000000023px;background:#f1f6fe"></div>
<div style="position:absolute;left:1px;top:625.8px;width:451px;height:1px;background:#e3e5e8"></div>
<div class="t" style="right:961.6px;top:626.1999999999999px;height:23.600000000000023px;line-height:23.600000000000023px;font-size:8.9px;color:#5a5a5a;transform-origin:right center;transform:scaleX(1.02);"><b>$1,530,000</b></div>
<div class="t" style="right:883.1px;top:626.1999999999999px;height:23.600000000000023px;line-height:23.600000000000023px;font-size:8.9px;color:#5a5a5a;transform-origin:right center;transform:scaleX(1.02);"><b>$504,600</b></div>
<div class="t" style="right:793.2px;top:626.1999999999999px;height:23.600000000000023px;line-height:23.600000000000023px;font-size:8.9px;color:#5a5a5a;transform-origin:right center;transform:scaleX(1.02);"><b>$1,025,400</b></div>
<div class="t" style="right:703.2px;top:626.1999999999999px;height:23.600000000000023px;line-height:23.600000000000023px;font-size:8.9px;color:#5a5a5a;transform-origin:right center;transform:scaleX(1.02);"><b>$72,780</b></div>
<div class="t" style="right:620.5px;top:626.1999999999999px;height:23.600000000000023px;line-height:23.600000000000023px;font-size:8.9px;color:#5a5a5a;transform-origin:right center;transform:scaleX(1.02);"><b>$108,036</b></div>
<div class="t" style="right:542px;top:626.1999999999999px;height:23.600000000000023px;line-height:23.600000000000023px;font-size:8.9px;color:#5a5a5a;transform-origin:right center;transform:scaleX(1.02);"><b>$844,584</b></div>
<div class="t" style="right:433.70000000000005px;top:626.1999999999999px;height:23.600000000000023px;line-height:23.600000000000023px;font-size:8.9px;color:#5a5a5a;transform-origin:right center;transform:scaleX(1.02);"><b>$460,800</b></div>
<div class="t" style="right:265.29999999999995px;top:626.1999999999999px;height:23.600000000000023px;line-height:23.600000000000023px;font-size:8.9px;color:#5a5a5a;transform-origin:right center;transform:scaleX(1.02);"><b>$383,784</b></div>
<div class="t" style="right:117px;top:626.1999999999999px;height:23.600000000000023px;line-height:23.600000000000023px;font-size:8.9px;color:#5a5a5a;transform-origin:right center;transform:scaleX(1.02);"><b>$512,700</b></div>
<div class="t" style="right:39.5px;top:626.1999999999999px;height:23.600000000000023px;line-height:23.600000000000023px;font-size:8.9px;color:#5a5a5a;transform-origin:right center;transform:scaleX(1.02);"><b>$512,700</b></div>
<div style="position:absolute;left:452.5px;top:626px;width:784.5px;height:1px;background:#c0c0c0;z-index:2"></div>
<div style="position:absolute;left:452.5px;top:625px;width:784.5px;height:1px;background:#555;z-index:2"></div>
<div style="position:absolute;left:1255px;top:626px;width:207px;height:1px;background:#c0c0c0;z-index:2"></div>
<div style="position:absolute;left:1255px;top:625px;width:207px;height:1px;background:#555;z-index:2"></div>
<div style="position:absolute;left:452.5px;top:650px;width:784.5px;height:1px;background:#c0c0c0;z-index:2"></div>
<div style="position:absolute;left:452.5px;top:649px;width:784.5px;height:1px;background:#555;z-index:2"></div>
<div style="position:absolute;left:1255px;top:650px;width:207px;height:1px;background:#c0c0c0;z-index:2"></div>
<div style="position:absolute;left:1255px;top:649px;width:207px;height:1px;background:#555;z-index:2"></div>
<div style="position:absolute;left:1px;top:649.4px;width:1461px;height:24.300000000000068px;background:#f1f6fe"></div>
<div style="position:absolute;left:1px;top:648.4px;width:451px;height:2px;background:#e6e6e6"></div>
<div class="t" style="right:542px;top:649.8px;height:24.300000000000068px;line-height:24.300000000000068px;font-size:8.9px;color:#7a7a7a;transform-origin:right center;transform:scaleX(1.025);">Equalizing Payment Received From (Paid To) Spouse</div>
<div class="t" style="right:433px;top:649.8px;height:24.300000000000068px;line-height:24.300000000000068px;font-size:8.9px;color:#7a7a7a;transform-origin:right center;transform:scaleX(1.02);">($38,508)</div>
<div class="t" style="right:117px;top:649.8px;height:24.300000000000068px;line-height:24.300000000000068px;font-size:8.9px;color:#7a7a7a;transform-origin:right center;transform:scaleX(1.02);">$0</div>
<div style="position:absolute;left:1px;top:673.7px;width:1461px;height:1px;background:#e3e5e8"></div>
<div class="t" style="right:542px;top:674.1px;height:24.375px;line-height:24.375px;font-size:8.9px;color:#7a7a7a;transform-origin:right center;transform:scaleX(1.025);">Total ATCV You Received</div>
<div class="t" style="right:433px;top:674.1px;height:24.375px;line-height:24.375px;font-size:8.9px;color:#7a7a7a;transform-origin:right center;transform:scaleX(1.02);">$422,292</div>
<div class="t" style="right:117px;top:674.1px;height:24.375px;line-height:24.375px;font-size:8.9px;color:#7a7a7a;transform-origin:right center;transform:scaleX(1.02);">$512,700</div>
<div style="position:absolute;left:5.8px;top:655.2px;width:75.1px;height:12.5px;background:#5aae78;border-radius:2px"></div>
<div class="t" style="left:16.8px;top:655.9000000000001px;height:12.5px;line-height:12.5px;font-size:7px;color:#fff;transform-origin:left center;transform:scaleX(0.95);">ATCV Reconciliation</div>
<svg style="position:absolute;left:8.8px;top:657.8px" width="6.6" height="6.4" viewBox="0 0 6.6 6.4"><path d="M5.2 3.6 V5.9 H0.5 V1.1 H3.8" fill="none" stroke="#fff" stroke-width="1"/><path d="M1.5 2.9 L2.9 4.3 L6.2 1" stroke="#fff" stroke-width="1.2" fill="none"/></svg>
<div style="position:absolute;left:5.8px;top:679.3px;width:66.6px;height:12.8px;background:#5aae78;border-radius:2px"></div>
<div class="t" style="left:16.8px;top:680.0px;height:12.8px;line-height:12.8px;font-size:7px;color:#fff;transform-origin:left center;transform:scaleX(0.95);">Scenario Analysis</div>
<svg style="position:absolute;left:8.8px;top:683px" width="6.4" height="6" viewBox="0 0 6.4 6"><rect x="0" y="5.2" width="6.4" height="0.8" fill="#fff"/><rect x="0.3" y="3" width="1.4" height="2.6" fill="#fff"/><rect x="2.4" y="0.3" width="1.4" height="5.3" fill="#fff"/><rect x="4.5" y="1.6" width="1.4" height="4" fill="#fff"/></svg>
<div style="position:absolute;left:1237.2px;top:72.9px;width:17.8px;height:494.1px;background:#d2d2d2"></div>
<div style="position:absolute;left:1237.2px;top:577.2px;width:17.8px;height:72.79999999999995px;background:#d2d2d2"></div>
</body></html>
